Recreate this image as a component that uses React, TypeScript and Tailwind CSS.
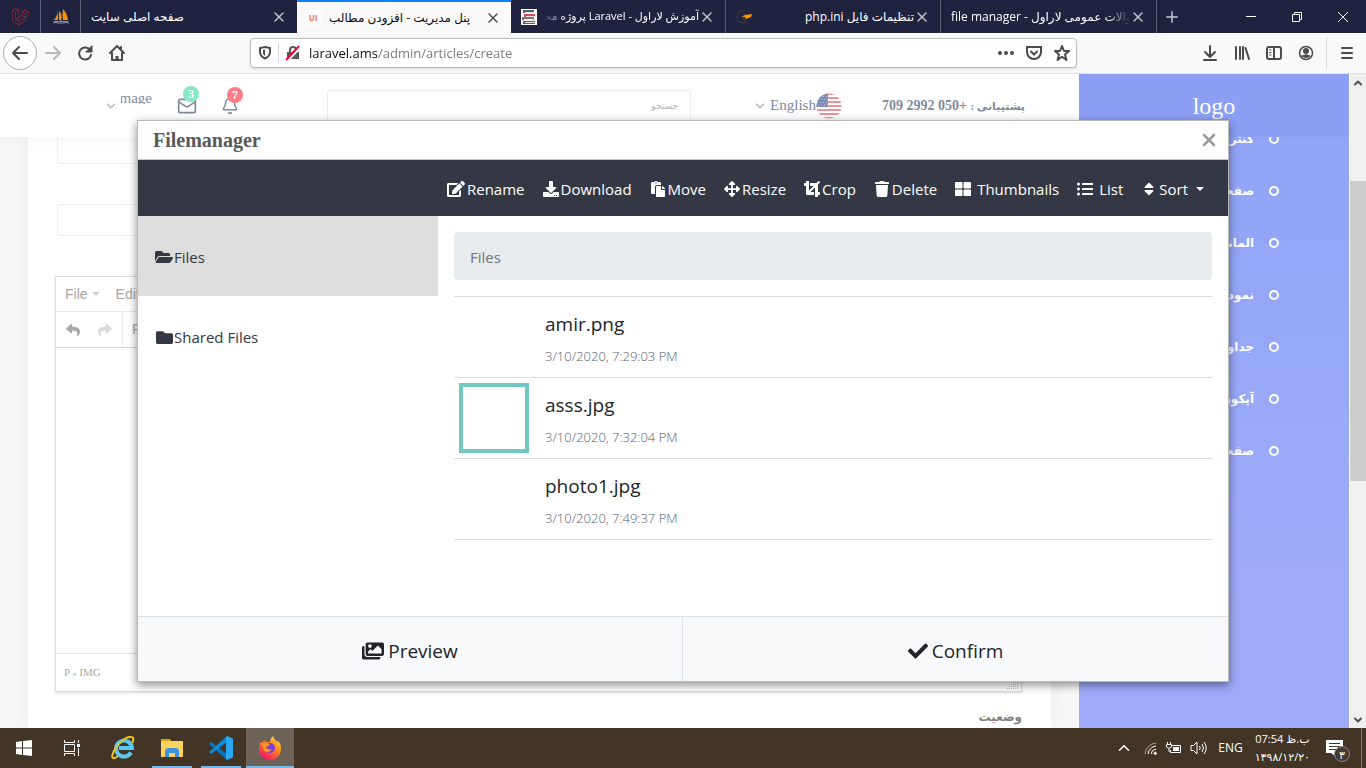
import type { ReactNode } from 'react';
import {
  FaArrowsAlt,
  FaCheck,
  FaCrop,
  FaDownload,
  FaEdit,
  FaFolder,
  FaFolderOpen,
  FaImages,
  FaLaravel,
  FaListUl,
  FaPaste,
  FaReply,
  FaShare,
  FaSort,
  FaThLarge,
  FaTrash,
} from 'react-icons/fa';
import { Bell, ChevronDown, ChevronUp, Mail, Plus, X } from 'lucide-react';

const files = [
  { name: 'amir.png', date: '3/10/2020, 7:29:03 PM', selected: false },
  { name: 'asss.jpg', date: '3/10/2020, 7:32:04 PM', selected: true },
  { name: 'photo1.jpg', date: '3/10/2020, 7:49:37 PM', selected: false },
];

const menu = ['کنترل پنل', 'صفحات', 'المانها', 'نمودارها', 'جداول', 'آیکون ها', 'صفحه ها'];

function CloseTab({ dark }: { dark?: boolean }) {
  return (
    <button aria-label="Close tab" className="shrink-0">
      <X size={16} strokeWidth={2} className={dark ? 'text-[#4a4a4f]' : 'text-[#c4c4cf]'} />
    </button>
  );
}

function TabStrip() {
  return (
    <div className="h-[33px] shrink-0 flex bg-[#202340] text-white text-[12px] font-['Open_Sans','DejaVu_Sans',sans-serif]">
      <div className="w-[41px] shrink-0 flex items-center justify-center border-r border-[#5b5d74]">
        <FaLaravel size={17} className="text-[#b52e31]" />
      </div>
      <div className="w-10 shrink-0 flex items-center justify-center border-r border-[#5b5d74]">
        <svg width="16" height="16" viewBox="0 0 16 16">
          <path d="M5 1Q5 6 1 11h4zM6 2q4 4 2 9H6zM10 0q-1 6 0 11h5Q14 4 10 0z" fill="#f29111" />
          <path d="M1 12.500h14M1 15v-3l2 2 2-2v3M7 15v-3h2v3M11 15v-3l2 2 2-2v3" fill="none" stroke="#8d8fa6" strokeWidth="1" />
        </svg>
      </div>
      <div className="flex-1 max-w-[216px] min-w-0 flex items-center pl-2.5 pr-2.5">
        <span dir="rtl" className="truncate text-[12px]">صفحه اصلی سایت</span>
        <span className="flex-1" />
        <CloseTab />
      </div>
      <div className="flex-1 max-w-[214px] min-w-0 flex items-center pl-2 pr-2.5 bg-[#f9f9fa] text-[#0c0c0d] border-t-2 border-[#0a84ff]">
        <span className="size-4 shrink-0 bg-white text-[#f0743e] text-[8px] font-bold flex items-center justify-center mr-2">UI</span>
        <span dir="rtl" className="flex-1 overflow-hidden whitespace-nowrap text-[12px] text-end">پنل مدیریت - افزودن مطالب</span>
        <CloseTab dark />
      </div>
      <div className="flex-1 max-w-[215px] min-w-0 flex items-center pl-2.5 pr-2.5 border-r border-[#5b5d74]">
        <svg className="shrink-0" width="16" height="16" viewBox="0 0 16 16">
          <path fill="#fff" d="M0 0h16v16H0z" />
          <path fill="#56606e" d="M2 1h11v3H2zM2 12h12v3H2z" />
          <path fill="#d54b5d" d="M3 5h11v3H3z" />
          <path fill="#8b6f74" d="M1 8h12v3H1z" />
          <path stroke="#e3e3e3" d="M4 3.500h9M5 7.500h9M3 10.500h9M4 13.500h10" />
        </svg>
        <span dir="rtl" className="flex-1 overflow-hidden whitespace-nowrap text-[11px] ml-1.5 mask-[linear-gradient(to_right,transparent,black_24px)]">
          آموزش لاراول - Laravel پروژه محور
        </span>
        <CloseTab />
      </div>
      <div className="flex-1 max-w-[215px] min-w-0 flex items-center pl-2.5 pr-2.5 border-r border-[#5b5d74]">
        <svg className="shrink-0" width="16" height="16" viewBox="0 0 16 16">
          <path d="M9 2a6 6 0 1 0 1 11M10 5a3 3 0 1 0 0 6" fill="none" stroke="#35363f" strokeWidth="1.5" />
          <path d="M6 8l3-2 7-1-1 3-5 2-1-2z" fill="#ff9800" />
        </svg>
        <span dir="rtl" className="flex-1 overflow-hidden whitespace-nowrap text-[12px]">تنظیمات فایل php.ini</span>
        <CloseTab />
      </div>
      <div className="flex-1 max-w-[216px] min-w-0 flex items-center pl-2.5 pr-2.5 border-r border-[#5b5d74]">
        <span className="flex-1 overflow-hidden whitespace-nowrap text-[12px] mask-[linear-gradient(to_left,transparent,black_24px)]">
          file manager - سوالات عمومی لاراول
        </span>
        <CloseTab />
      </div>
      <button aria-label="New tab" className="pl-1.5">
        <Plus size={18} className="text-[#c9c9d2]" />
      </button>
      <div className="ml-auto flex items-center gap-[30px] pr-[17px]">
        <button aria-label="Minimize">
          <svg width="12" height="12" viewBox="0 0 12 12" stroke="#fff"><path d="M1 5.500h10" /></svg>
        </button>
        <button aria-label="Restore" className="ml-1">
          <svg width="12" height="12" viewBox="0 0 12 12" stroke="#fff" fill="none"><path d="M1.500 3.500h7v7h-7zM3.500 3.500v-2h7v7h-2" /></svg>
        </button>
        <button aria-label="Close" className="ml-1">
          <svg width="12" height="12" viewBox="0 0 12 12" stroke="#fff"><path d="M1 1l10 10M11 1L1 11" /></svg>
        </button>
      </div>
    </div>
  );
}

function NavIcon({ label, children }: { label: string; children: ReactNode }) {
  return (
    <button aria-label={label} className="size-8 flex items-center justify-center">
      <svg width="16" height="16" viewBox="0 0 16 16" fill="none" stroke="currentColor" strokeWidth="2" strokeLinecap="round" strokeLinejoin="round">
        {children}
      </svg>
    </button>
  );
}

function AddressBar() {
  return (
    <div className="h-[41px] shrink-0 flex items-center bg-[#f9f9fa] border-b border-[#e0e0e1] text-[#4a4a4f]">
      <div className="w-[250px] shrink-0 flex items-center pl-[3px]">
        <div className="size-[34px] rounded-full border border-[#b1b1b3] bg-white flex items-center justify-center">
          <NavIcon label="Back"><path d="M15 8H1M7 2L1 8l6 6" /></NavIcon>
        </div>
        <div className="flex text-[#b8b8ba]">
          <NavIcon label="Forward"><path d="M1 8h14M9 2l6 6-6 6" /></NavIcon>
        </div>
        <NavIcon label="Reload">
          <path d="M13 5a6 6 0 1 0 1 5" />
          <path d="M15 1v6H9z" fill="currentColor" strokeWidth="1" />
        </NavIcon>
        <NavIcon label="Home">
          <path d="M1 8l7-7 7 7M3 8v7h10V8M12 2v2" />
          <path d="M8 15v-4" strokeWidth="3" strokeLinecap="butt" />
        </NavIcon>
      </div>
      <div className="flex-1 min-w-0 h-[30px] flex items-center bg-white border border-[#bebebe] rounded-sm shadow-sm pl-[7px] pr-1.5">
        <svg width="14" height="16" viewBox="0 0 14 16" fill="none" stroke="currentColor" strokeWidth="2">
          <path d="M7 2l5 1v4c0 3-1.500 5-5 6.500C3.500 12 2 10 2 7V3z" />
          <path d="M7 4.500v6.500C5.500 10 5 9 5 7V5z" fill="currentColor" stroke="none" />
        </svg>
        <span className="w-px h-5 bg-[#d7d7db] mx-1.5" />
        <svg width="16" height="16" viewBox="0 0 16 16" fill="none">
          <path d="M5 7V5a3 3 0 0 1 6 0v2" stroke="#5a5a5e" strokeWidth="2" />
          <path d="M2 7h12v7H2z" fill="#5a5a5e" />
          <path d="M3 15.500L16 2" stroke="#fff" strokeWidth="2" />
          <path d="M1 15L14 1" stroke="#ff0039" strokeWidth="2" />
        </svg>
        <input
          aria-label="Address"
          defaultValue="laravel.ams/admin/articles/create"
          className="flex-1 min-w-0 ml-2 pt-0.5 outline-none text-[13px] font-['Open_Sans',sans-serif] text-transparent bg-clip-text bg-[linear-gradient(90deg,#0c0c0d_69px,#77777b_69px)]"
        />
        <div className="flex items-center gap-3">
          <svg width="16" height="16" viewBox="0 0 16 16" fill="currentColor">
            <circle cx="2" cy="8" r="2" /><circle cx="8" cy="8" r="2" /><circle cx="14" cy="8" r="2" />
          </svg>
          <svg width="16" height="16" viewBox="0 0 16 16" fill="none" stroke="currentColor" strokeWidth="2" strokeLinecap="round">
            <path d="M1 2h14v5a7 7 0 0 1-14 0zM5 6.500l3 3 3-3" />
          </svg>
          <svg width="16" height="16" viewBox="0 0 16 16" fill="none" stroke="currentColor" strokeWidth="2" strokeLinejoin="round">
            <path d="M8 1l2 5h5l-4 3.500L12.500 15 8 11.800 3.500 15 5 9.500 1 6h5z" />
          </svg>
        </div>
      </div>
      <div className="w-[289px] shrink-0 flex items-center justify-end pr-[3px]">
        <NavIcon label="Downloads"><path d="M8 1v10M3 7l5 5 5-5M2 15h12" /></NavIcon>
        <NavIcon label="Library"><path d="M2 2v12M6 2v12M9 2v12M11.500 3L15 14" /></NavIcon>
        <NavIcon label="Sidebars">
          <path d="M1 4a2 2 0 0 1 2-2h10a2 2 0 0 1 2 2v8a2 2 0 0 1-2 2H3a2 2 0 0 1-2-2zM8 2v12" />
          <path d="M3.500 5H5M3.500 7.500H5M3.500 10H5" strokeWidth="1" />
        </NavIcon>
        <NavIcon label="Account">
          <circle cx="8" cy="8" r="6.500" strokeWidth="1.500" />
          <circle cx="8" cy="6" r="2" fill="currentColor" />
          <path d="M4 11q4-2.500 8 0-4 3-8 0z" fill="currentColor" strokeWidth="1" />
        </NavIcon>
        <span className="w-px h-8 bg-[#d7d7db] mx-1" />
        <NavIcon label="Menu"><path d="M3 3h10M3 8h10M3 13h10" /></NavIcon>
      </div>
    </div>
  );
}

function Flag() {
  return (
    <svg width="26" height="26" viewBox="0 0 26 26">
      <clipPath id="round"><circle cx="13" cy="13" r="12.500" /></clipPath>
      <g clipPath="url(#round)">
        <path fill="#fff" d="M0 0h26v26H0z" />
        <path stroke="#e8939c" strokeWidth="2" d="M0 1h26M0 5h26M0 9h26M0 13h26M0 17h26M0 21h26M0 25h26" />
        <path fill="#7d8cb5" d="M0 0h12v14H0z" />
        <path stroke="#c3cbe0" strokeDasharray="1 2" d="M1 3.500h11M2 6.500h10M1 9.500h11M2 12h10" />
      </g>
    </svg>
  );
}

function PageHeader() {
  return (
    <header className="relative z-10 h-[63px] shrink-0 flex items-center bg-white pl-[104px] pr-[54px] font-['Liberation_Serif','DejaVu_Sans',serif] text-[#7c8a9c] shadow-[0_4px_14px_rgba(0,0,0,0.04)]">
      <ChevronDown size={14} strokeWidth={3} className="text-[#b9bfc7]" />
      <span className="ml-[3px] mb-4 w-[31px] h-3 flex items-center justify-end overflow-hidden text-[15px] leading-3">image</span>
      <div className="relative ml-[25px]">
        <Mail size={20} strokeWidth={2} />
        <span className="absolute -top-2.5 left-1.5 size-4 rounded-full bg-[#86e8c6] text-white text-[12px] font-bold flex items-center justify-center">3</span>
      </div>
      <div className="relative ml-6">
        <Bell size={18} strokeWidth={2} />
        <span className="absolute -top-2.5 left-1.5 size-4 rounded-full bg-[#ff7b86] text-white text-[12px] font-bold flex items-center justify-center">7</span>
      </div>
      <input
        dir="rtl"
        aria-label="جستجو"
        placeholder="جستجو"
        className="ml-[88px] flex-1 min-w-0 h-[31px] border border-[#ececec] rounded-xs px-3 text-[9px] outline-none placeholder:text-[#b5b5b5]"
      />
      <a href="#language" className="ml-[62px] flex items-center text-[15px]">
        <ChevronDown size={14} strokeWidth={3} className="text-[#b9bfc7]" />
        <span className="ml-[3px]">English</span>
        <Flag />
      </a>
      <span dir="rtl" className="ml-10 text-[14px] font-bold whitespace-nowrap">
        <span className="text-[11px]">پشتیبانی :</span> <span dir="ltr">709 2992 050+</span>
      </span>
    </header>
  );
}

function Editor() {
  return (
    <div className="mt-10 -ml-0.5 border border-[#dcdcdc] shadow-sm text-[#a6a6a6] font-['Liberation_Sans',sans-serif] text-[14px]">
      <div className="h-[35px] flex items-center gap-4 px-[9px] border-b border-[#ececec]">
        {['File', 'Edit', 'View', 'Insert'].map(label => (
          <button key={label} className="flex items-center gap-1">
            {label}
            <svg width="8" height="4" viewBox="0 0 8 4"><path d="M0 0h8L4 4z" fill="#cfcfcf" /></svg>
          </button>
        ))}
      </div>
      <div className="h-9 flex items-center border-b border-[#d4d4d4]">
        <button aria-label="Undo" className="ml-2.5 mr-[18px]"><FaReply size={14} className="text-[#a9a9a9]" /></button>
        <button aria-label="Redo" className="mr-2.5"><FaShare size={14} className="text-[#dadada]" /></button>
        <span className="w-px h-full bg-[#ececec] mr-[9px]" />
        <button>Formats</button>
      </div>
      <div className="h-[305px]" />
      <div className="h-[38px] flex items-center justify-between border-t border-[#e2e2e2] pl-2 text-[11px] font-['Liberation_Serif',serif]">
        <span>P <span className="text-[8px]">»</span> IMG</span>
        <svg className="self-end mr-0.5 mb-0.5" width="12" height="8" viewBox="0 0 12 8">
          <path stroke="#c0c0c0" strokeDasharray="1 1" d="M6 1.500h6M4 3.500h8M2 5.500h10M0 7.500h12" />
        </svg>
      </div>
    </div>
  );
}

function Sidebar() {
  return (
    <aside dir="rtl" className="w-[270px] shrink-0 overflow-hidden bg-linear-to-b from-[#8fa3f6] to-[#9fabf9] to-80% text-white">
      <div className="relative z-10 h-[63px] flex items-center justify-center bg-[#8c9ff5] font-['Liberation_Serif',serif] text-[24px]">logo</div>
      <ul className="-mt-6">
        {menu.map(item => (
          <li key={item}>
            <a href="#menu" className="h-[52px] flex items-center gap-[15px] pr-[70px] text-[12px] font-bold font-['DejaVu_Sans',sans-serif]">
              <span className="size-2.5 rounded-full border-2 border-white" />
              {item}
            </a>
          </li>
        ))}
      </ul>
    </aside>
  );
}

function ScrollBar() {
  return (
    <div className="w-[17px] shrink-0 flex flex-col items-center bg-[#f0f0f0] border-l border-white text-[#505050]">
      <span className="h-[17px] flex items-center"><ChevronUp size={12} strokeWidth={4} /></span>
      <span className="flex-[90]" />
      <span className="flex-[300] w-full bg-[#cdcdcd]" />
      <span className="flex-[230]" />
      <span className="h-[17px] flex items-center"><ChevronDown size={12} strokeWidth={4} /></span>
    </div>
  );
}

function FileManager() {
  return (
    <div role="dialog" aria-label="Filemanager" className="flex-1 min-w-0 flex flex-col bg-white border border-[#b9b9b9] shadow-[0_3px_9px_rgba(0,0,0,0.45)] font-['Open_Sans',sans-serif] text-[15px] text-[#212529]">
      <div className="h-[39px] shrink-0 flex items-center justify-between px-[15px] border-b border-[#c5c5c5]">
        <h2 className="font-['Liberation_Serif',serif] font-bold text-[20px] text-[#595959]">Filemanager</h2>
        <button aria-label="Close" className="-mr-1.5"><X size={20} strokeWidth={3} className="text-[#9b9b9b]" /></button>
      </div>
      <div className="h-14 shrink-0 flex items-center justify-end gap-[18px] pr-6 pt-0.5 bg-[#343844] text-white">
        <button className="flex items-center gap-0.5"><FaEdit size={18} />Rename</button>
        <button className="flex items-center gap-0.5"><FaDownload size={16} />Download</button>
        <button className="flex items-center gap-0.5"><FaPaste size={16} />Move</button>
        <button className="flex items-center gap-0.5"><FaArrowsAlt size={16} />Resize</button>
        <button className="flex items-center gap-0.5"><FaCrop size={16} />Crop</button>
        <button className="flex items-center gap-0.5"><FaTrash size={16} />Delete</button>
        <button className="flex items-center gap-1.5"><FaThLarge size={16} />Thumbnails</button>
        <button className="flex items-center gap-1.5"><FaListUl size={16} />List</button>
        <button className="flex items-center gap-0.5">
          <FaSort size={16} />
          Sort
          <svg className="ml-1.5" width="8" height="4" viewBox="0 0 8 4"><path d="M0 0h8L4 4z" fill="#fff" /></svg>
        </button>
      </div>
      <div className="flex-1 min-h-0 flex">
        <nav className="w-[300px] shrink-0 text-[#343844]">
          <a href="#files" className="h-20 flex items-center gap-px pl-[17px] pt-0.5 bg-[#ddd]">
            <FaFolderOpen size={18} />Files
          </a>
          <a href="#shared" className="h-20 flex items-center gap-px pl-[18px] pt-0.5">
            <FaFolder size={17} />Shared Files
          </a>
        </nav>
        <div className="flex-1 min-w-0 p-4">
          <div className="h-12 flex items-center px-4 pt-0.5 rounded-sm bg-[#e9ecef] text-[#6c757d]">Files</div>
          <ul className="mt-4 border-t border-[#dcdcdc]">
            {files.map(file => (
              <li key={file.name} className="h-[81px] flex items-center px-[5px] border-b border-[#dcdcdc]">
                <span className={`size-[70px] shrink-0 border-4 ${file.selected ? 'border-[#73c7c2]' : 'border-transparent'}`} />
                <div className="ml-4 pt-1.5">
                  <p className="text-[19px] leading-8">{file.name}</p>
                  <p className="text-[13px] leading-8 font-light text-[#56606a]">{file.date}</p>
                </div>
              </li>
            ))}
          </ul>
        </div>
      </div>
      <div className="h-[65px] shrink-0 grid grid-cols-2 border-t border-[#dee2e6] bg-[#f8f9fa] text-[19px]">
        <button className="flex items-center justify-center gap-1 pt-1 border-r border-[#dee2e6]"><FaImages size={22} />Preview</button>
        <button className="flex items-center justify-center gap-1 pt-1"><FaCheck size={20} />Confirm</button>
      </div>
    </div>
  );
}

function TaskBar() {
  return (
    <footer className="h-10 shrink-0 flex items-stretch bg-[#423526] text-white font-['Open_Sans','DejaVu_Sans',sans-serif] text-[11px]">
      <button aria-label="Start" className="w-12 flex items-center justify-center">
        <svg width="16" height="16" viewBox="0 0 16 16" fill="#fff"><path d="M0 2l6-1v6.500H0zM7 1l9-1v7.500H7zM0 8.500h6V15l-6-1zM7 8.500h9V16l-9-1z" /></svg>
      </button>
      <button aria-label="Task view" className="w-12 flex items-center justify-center">
        <svg width="16" height="16" viewBox="0 0 16 16" fill="none" stroke="#fff">
          <path d="M.5 0v2.500h10V0M.5 16v-2.500h10V16M.5 4.500h10v7H.5zM14.500 0v3M14.500 8v8" />
          <path d="M13 4h3v3h-3z" fill="#fff" stroke="none" />
        </svg>
      </button>
      <button aria-label="Internet Explorer" className="w-12 ml-[3px] flex items-center justify-center">
        <svg width="24" height="24" viewBox="0 0 24 24" fill="none">
          <path d="M20 16.500a8 8 0 1 1 1-4.500H8" stroke="#58c8f5" strokeWidth="4" />
          <path d="M7 20C2 24 0 22 2 17 5 9 15 0 20 1c3 0 3 3 1 6" stroke="#f2c21b" strokeWidth="2" />
        </svg>
      </button>
      <button aria-label="File Explorer" className="w-12 ml-px flex flex-col items-center justify-center">
        <svg className="mt-auto mb-2" width="22" height="20" viewBox="0 0 22 20">
          <path d="M0 1h9l2 3H0z" fill="#e3a008" />
          <path d="M0 3h22v16H0z" fill="#ffd45e" />
          <path d="M4 19v-7l2-2h10l2 2v7h-4v-4H8v4z" fill="#3f95d9" />
        </svg>
        <span className="w-10 h-0.5 bg-[#76b9ed]" />
      </button>
      <button aria-label="Visual Studio Code" className="w-12 ml-px flex flex-col items-center justify-center">
        <svg className="mt-auto mb-1.5" width="24" height="24" viewBox="0 0 24 24">
          <path d="M0 8l2-2 16 12v6z" fill="#0079c4" />
          <path d="M0 16l2 2L18 6V0z" fill="#0a8bdb" />
          <path d="M18 0l6 2.500v19L18 24l-1-1V1z" fill="#2aa7f0" />
        </svg>
        <span className="w-10 h-0.5 bg-[#76b9ed]" />
      </button>
      <button aria-label="Firefox" className="w-12 ml-px flex flex-col items-center justify-center bg-[#6d6258]">
        <svg className="mt-auto mb-1.5" width="24" height="24" viewBox="0 0 24 24">
          <defs>
            <linearGradient id="fox" x1="1" y1="0" x2=".3" y2="1">
              <stop offset="0" stopColor="#fff14f" />
              <stop offset=".45" stopColor="#ff8a16" />
              <stop offset="1" stopColor="#f5156c" />
            </linearGradient>
          </defs>
          <path d="M2 6l2 1 2-3 2 2 4 0 1-4 2-2c1 3 3 4 4 6l1-1c3 3 3 6 3 8a11 11 0 0 1-22 0c0-3 0-5 1-7z" fill="url(#fox)" />
          <circle cx="12" cy="12" r="5" fill="#7a3fd6" />
          <path d="M3 7l9 1c-1 2-3 2-4 3 1 3 4 3 6 2-2 4-8 4-9-1z" fill="#ff9a1f" />
        </svg>
        <span className="w-full h-0.5 bg-[#76b9ed]" />
      </button>
      <div className="ml-auto flex items-center pr-1">
        <ChevronUp size={18} strokeWidth={2} />
        <svg className="ml-2.5" width="16" height="16" viewBox="0 0 16 16" fill="none" stroke="#fff">
          <path d="M2 14A12 12 0 0 1 13 3" stroke="#a9a29b" />
          <path d="M5 14a9 9 0 0 1 8-8M8 14a6 6 0 0 1 5-5M10.500 14a3 3 0 0 1 2.500-2" />
          <circle cx="12.500" cy="13.500" r="1" fill="#fff" />
        </svg>
        <svg className="ml-[7px]" width="16" height="12" viewBox="0 0 16 12" fill="none" stroke="#fff">
          <path d="M5 3.500h9.500v7H4.500V8M1.500 0v2M4.500 0v2M.5 2.500h5V5L3 6.500.5 5zM3 6.500V10" />
          <path d="M7 5h6v4H7z" fill="#fff" stroke="none" />
        </svg>
        <svg className="ml-2" width="18" height="14" viewBox="0 0 18 14" fill="none" stroke="#fff">
          <path d="M1 4.500h2.500L7 1v12L3.500 9.500H1zM9.500 5q1.500 2 0 4M12 3q3 4 0 8M14 1q4.500 6 0 12" />
        </svg>
        <span className="ml-2.5 text-[12px]">ENG</span>
        <div className="ml-3 text-center leading-[18px] whitespace-nowrap">
          <p>07:54 <span dir="rtl">ب.ظ</span></p>
          <p>۱۳۹۸/۱۲/۲۰</p>
        </div>
        <div className="relative ml-4 mr-[18px]">
          <svg width="17" height="16" viewBox="0 0 17 16"><path d="M0 0h17v13H9v3l-4-3H0z" fill="#fff" /><path d="M3 3.500h11M3 6.500h11M3 9.500h7" stroke="#423526" /></svg>
          <span className="absolute top-1.5 left-2 size-4 rounded-full border border-[#8d857c] bg-[#423c35] text-[11px] leading-none flex items-center justify-center">۳</span>
        </div>
        <span className="w-px h-full bg-[#867d73]" />
      </div>
    </footer>
  );
}

export default function App() {
  return (
    <div className="h-screen flex flex-col overflow-hidden bg-white">
      <TabStrip />
      <AddressBar />
      <div className="relative flex-1 min-h-0 flex">
        <main className="flex-1 min-w-0 flex flex-col overflow-hidden bg-[#f8f8f8]">
          <PageHeader />
          <section className="flex-1 mx-7 px-[29px] bg-white shadow-[0_0_20px_rgba(69,90,100,0.08)]">
            <input aria-label="عنوان" className="block w-full -mt-1 h-[31px] border border-[#efefef] rounded-xs" />
            <input aria-label="تصویر" className="block w-full mt-10 h-8 border border-[#efefef] rounded-xs" />
            <Editor />
            <span dir="rtl" className="block mt-4 text-[12px] text-[#808080] font-bold font-['DejaVu_Sans',sans-serif]">وضعیت</span>
          </section>
        </main>
        <Sidebar />
        <ScrollBar />
        <div className="absolute inset-0 z-20 flex px-[137px] py-[46px]">
          <FileManager />
        </div>
      </div>
      <TaskBar />
    </div>
  );
}
